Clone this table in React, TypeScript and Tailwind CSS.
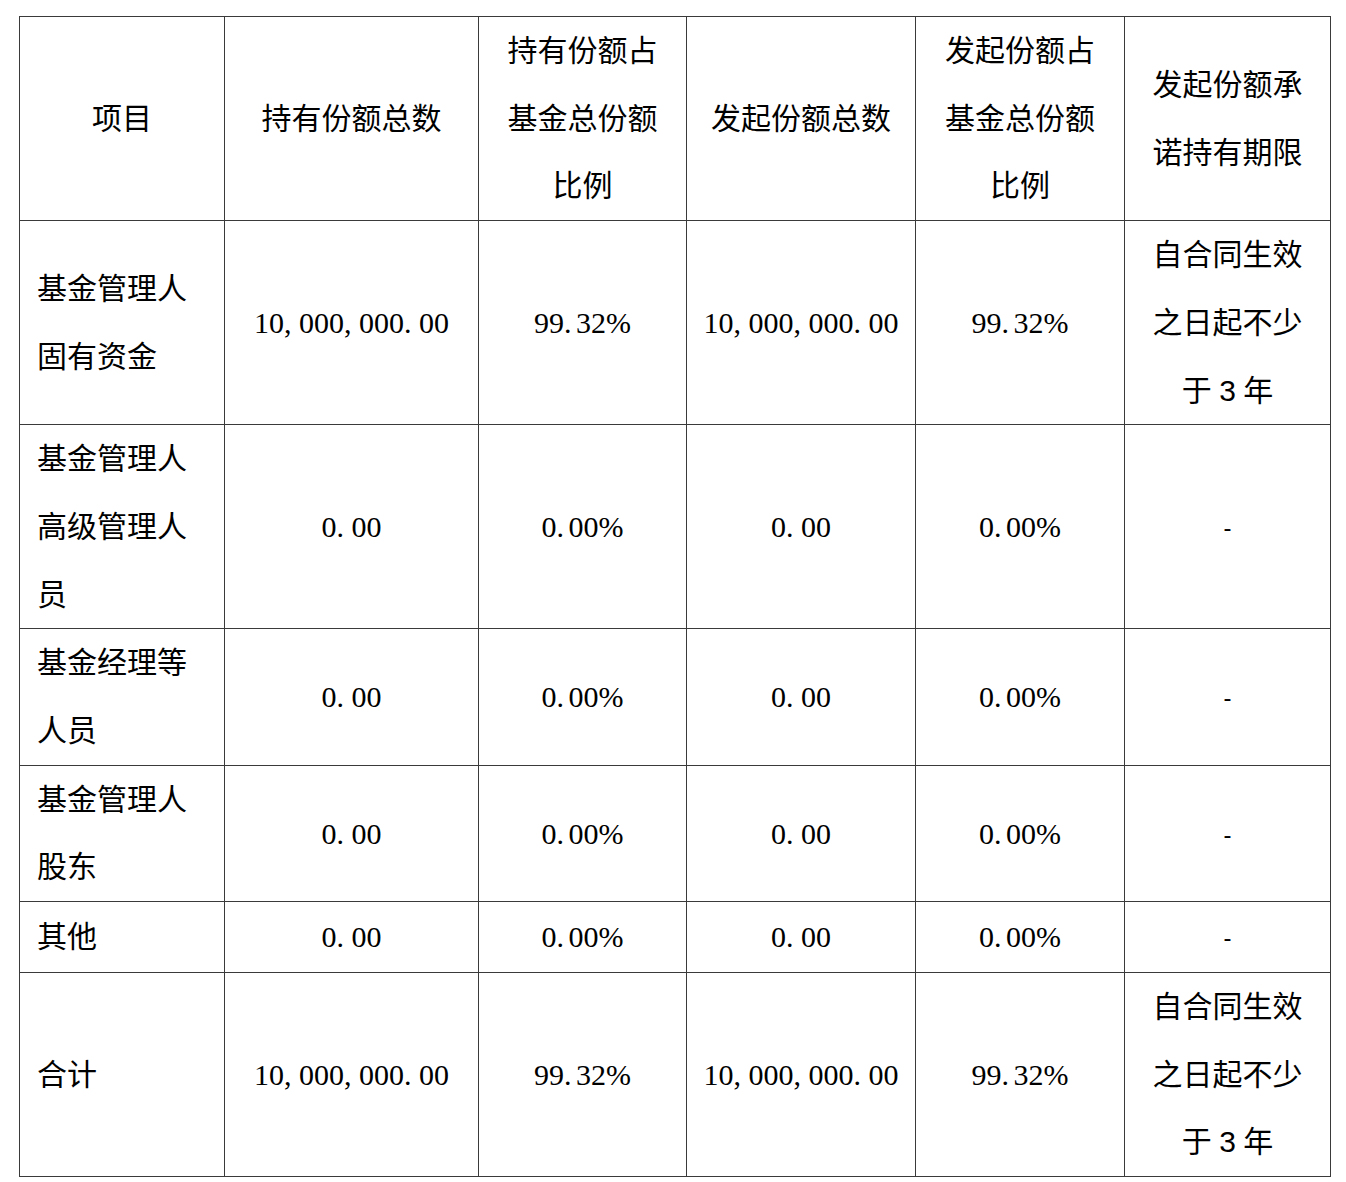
const header = [
  "项目",
  "持有份额总数",
  "持有份额占基金总份额比例",
  "发起份额总数",
  "发起份额占基金总份额比例",
  "发起份额承诺持有期限",
];

const big = "10, 000, 000. 00";

const rows = [
  { name: "基金管理人固有资金", held: big, heldPct: "99. 32%", init: big, initPct: "99. 32%", term: true },
  { name: "基金管理人高级管理人员", held: "0. 00", heldPct: "0. 00%", init: "0. 00", initPct: "0. 00%", term: false },
  { name: "基金经理等人员", held: "0. 00", heldPct: "0. 00%", init: "0. 00", initPct: "0. 00%", term: false },
  { name: "基金管理人股东", held: "0. 00", heldPct: "0. 00%", init: "0. 00", initPct: "0. 00%", term: false },
  { name: "其他", held: "0. 00", heldPct: "0. 00%", init: "0. 00", initPct: "0. 00%", term: false },
  { name: "合计", held: big, heldPct: "99. 32%", init: big, initPct: "99. 32%", term: true },
];

const cell = "border border-[#3a3a3a] px-[17px] py-0 align-middle";
const numCell = "border border-[#3a3a3a] px-0 py-0 align-middle text-center whitespace-nowrap";
const pct = "[word-spacing:-3px]";

export default function App() {
  return (
    <div className="bg-white w-[1346px] min-h-[1182px] pt-[16px] pl-[19px] font-['Liberation_Serif','Noto_Sans_CJK_SC',serif] text-[30px] leading-[67.7px] text-black">
      <table className="table-fixed border-collapse w-[1311px]">
        <colgroup>
          <col className="w-[205px]" />
          <col className="w-[254px]" />
          <col className="w-[208px]" />
          <col className="w-[229px]" />
          <col className="w-[209px]" />
          <col className="w-[206px]" />
        </colgroup>
        <thead>
          <tr>
            {header.map((h, i) => (
              <th key={i} className={`${cell} text-center font-normal`}>
                {h}
              </th>
            ))}
          </tr>
        </thead>
        <tbody>
          {rows.map((r, i) => (
            <tr key={i}>
              <td className={`${cell} text-left`}>{r.name}</td>
              <td className={numCell}>{r.held}</td>
              <td className={`${numCell} ${pct}`}>{r.heldPct}</td>
              <td className={numCell}>{r.init}</td>
              <td className={`${numCell} ${pct}`}>{r.initPct}</td>
              <td className={`${cell} text-center`}>
                {r.term ? (
                  <>
                    自合同生效之日起不少于 <span className="font-['Liberation_Sans',sans-serif]">3</span> 年
                  </>
                ) : (
                  <span className="font-['Liberation_Sans',sans-serif] text-[24px]">-</span>
                )}
              </td>
            </tr>
          ))}
        </tbody>
      </table>
    </div>
  );
}
